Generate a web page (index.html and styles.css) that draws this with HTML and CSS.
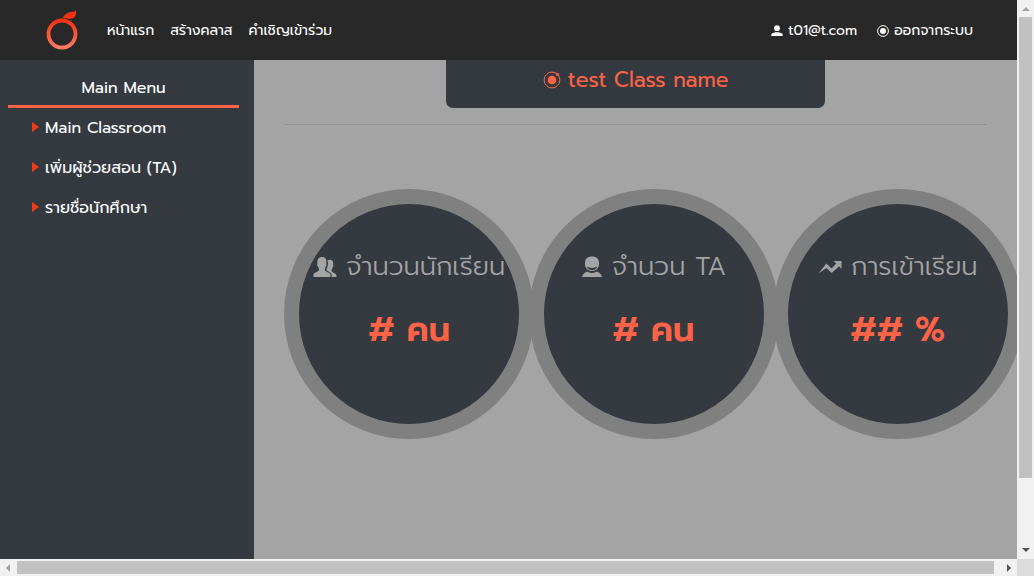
FILE: index.html
```html
<!DOCTYPE html>
<html lang="th">
<head>
<meta charset="utf-8">
<meta name="viewport" content="width=device-width, initial-scale=1">
<title>test Class name</title>
<link rel="stylesheet" href="styles.css">
</head>
<body>
<div class="page">
  <header class="topbar">
    <a class="brand" href="#" aria-label="Home">
      <svg viewBox="0 0 32 42" width="32" height="42" aria-hidden="true">
        <defs>
          <linearGradient id="ring" x1="0" y1="0" x2="0" y2="1">
            <stop offset="0" stop-color="#f53210"/>
            <stop offset="1" stop-color="#ff7a62"/>
          </linearGradient>
        </defs>
        <circle cx="16" cy="25" r="13.500" fill="none" stroke="url(#ring)" stroke-width="3.800"/>
        <path d="M16.500 9.300C19 4.200 23 3 26 2.900C28.300 2.800 29.500 2 30 1C30.600 5.700 29 9.200 25 9.800C22 10.300 19.500 8.700 16.500 9.300Z" fill="#f53210"/>
      </svg>
    </a>
    <nav class="links">
      <a href="#">หน้าแรก</a>
      <a href="#">สร้างคลาส</a>
      <a href="#">คำเชิญเข้าร่วม</a>
    </nav>
    <nav class="links account">
      <a href="#"><svg viewBox="0 0 12 12" width="12" height="12" aria-hidden="true"><circle cx="6" cy="3.200" r="2.900"/><path d="M0.300 11V9.300C1.500 7.600 4 7.200 6 7.200S10.500 7.600 11.700 9.300V11Z"/></svg>t01@t.com</a>
      <a href="#"><svg viewBox="0 0 12 12" width="12" height="12" aria-hidden="true"><circle cx="6" cy="6" r="5.400" fill="none" stroke="currentColor"/><circle cx="6" cy="6" r="3"/></svg>ออกจากระบบ</a>
    </nav>
  </header>
  <aside class="sidebar">
    <h2 class="menu-title">Main Menu</h2>
    <ul class="menu">
      <li><a href="#">Main Classroom</a></li>
      <li><a href="#">เพิ่มผู้ช่วยสอน (TA)</a></li>
      <li><a href="#">รายชื่อนักศึกษา</a></li>
    </ul>
  </aside>
  <main class="content">
    <h1 class="class-name"><svg viewBox="0 0 18 18" width="18" height="18" aria-hidden="true"><circle cx="9" cy="9" r="7.900" fill="none" stroke="currentColor"/><circle cx="9" cy="9" r="4.300"/><circle cx="14.500" cy="3.500" r="1.400"/></svg>test Class name</h1>
    <hr class="rule">
    <div class="stats">
      <section class="stat">
        <h3 class="label"><svg viewBox="0 0 24 24" width="24" height="24" aria-hidden="true"><path d="M0.500 22V19.500C1 17.500 4.500 17 5.700 15.500C6.500 14.500 5.500 13 5 11.500C4 11 3.900 9 4.400 8.500C4 4.500 5.500 2 9 2S14 4.500 13.300 8.500C13.900 9 13.600 11 12.700 11.500C12.300 13 11.300 14.500 12 15.500C13.500 17.200 17 17.500 17.500 19.500V22Z"/><path d="M14.500 5.500C18 3.200 21 5.800 20.100 9.700C20.700 10.200 20.200 12 19.500 12.500C19.200 14 18 15.500 18.800 16.500C20.300 18 23 18.300 23.500 20V22H18.700V19.500C18 17.500 15.500 16.800 13.500 15.200C13 13.800 14.500 12.500 14.700 11C15.400 9 15 7.500 14.500 5.500Z"/></svg>จำนวนนักเรียน</h3>
        <strong class="value"># คน</strong>
      </section>
      <section class="stat">
        <h3 class="label"><svg viewBox="0 0 22 24" width="22" height="24" aria-hidden="true"><path d="M4 8C4 3.500 7 1.500 11 1.500S18 3.500 18 8C18.500 13 15 16 11 16S3.500 13 4 8Z"/><path d="M5.500 11.800Q11 14 16.500 11.800Q14.500 15 11 15T5.500 11.800Z" fill="#343a40"/><path d="M1 22C1.500 19 4 17.500 6.500 16.500Q11 19.500 15.500 16.500C18 17.500 20.500 19 21 22Z"/></svg>จำนวน TA</h3>
        <strong class="value"># คน</strong>
      </section>
      <section class="stat">
        <h3 class="label"><svg viewBox="0 0 24 24" width="24" height="24" aria-hidden="true"><path d="M0.500 18.500L8.300 8.500L13.600 13.500L18.300 8.500L15.500 6H23.500V14L21 11.200L13.700 18L8.400 12.900Z"/></svg>การเข้าเรียน</h3>
        <strong class="value">## %</strong>
      </section>
    </div>
  </main>
</div>
<div class="bar bar-y" aria-hidden="true"><i class="arrow up"></i><i class="thumb"></i><i class="arrow down"></i></div>
<div class="bar bar-x" aria-hidden="true"><i class="arrow left"></i><i class="thumb"></i><i class="arrow right"></i></div>
</body>
</html>
```
FILE: styles.css
```css
* { box-sizing: border-box; }
body {
  margin: 0;
  height: 100vh;
  display: grid;
  grid-template: minmax(0, 1fr) 17px / minmax(0, 1fr) 17px;
  overflow: hidden;
  background: #dcdcdc;
  color: #fff;
  font: 16px/24px Prompt, Kanit, "Noto Sans Thai", "Noto Sans", sans-serif;
}
a { color: inherit; text-decoration: none; }
svg { fill: currentColor; flex: none; }

.page {
  display: grid;
  grid-template: 60px minmax(0, 1fr) / 25% minmax(0, 75%);
  overflow: hidden;
}
.topbar {
  grid-column: 1 / -1;
  display: flex;
  align-items: center;
  padding: 0 44px 0 46px;
  background: #282828;
  font-size: 14px;
}
.brand { display: flex; margin-right: 29px; }
.links { display: flex; gap: 16px; padding-top: 1px; white-space: nowrap; }
.links a { display: flex; align-items: center; gap: 5px; }
.account { margin-left: auto; gap: 20px; }

.sidebar { padding: 16px 15px 0 8px; background: #343a40; }
.menu-title {
  margin: 0;
  padding-bottom: 5px;
  border-bottom: 3px solid #ff6347;
  font-size: 16px;
  font-weight: 400;
  text-align: center;
}
.menu { margin: 0; padding: 8px 0 0 24px; list-style: none; }
.menu li { margin-bottom: 16px; }
.menu a { display: flex; align-items: center; gap: 6px; white-space: nowrap; }
.menu a::before {
  content: "";
  margin-bottom: 2px;
  border: solid transparent;
  border-width: 5px 0 5px 7px;
  border-left-color: #f53a1a;
}

.content { padding: 0 30px; background: #a4a4a4; }
.class-name {
  display: flex;
  justify-content: center;
  align-items: center;
  gap: 7px;
  width: 54%;
  height: 48px;
  margin: 0 auto;
  padding-bottom: 8px;
  border-radius: 0 0 7px 7px;
  background: #343a40;
  color: #ff6347;
  font-size: 21px;
  font-weight: 400;
}
.rule { margin: 16px 0 64px; border: 0; border-top: 1px solid #939393; }
.stats {
  display: grid;
  grid-template-columns: repeat(3, minmax(0, 1fr));
  margin-right: -30px;
}
.stat {
  width: 250px;
  height: 250px;
  padding-top: 45px;
  border: 15px solid #808080;
  border-radius: 50%;
  background: #343a40;
  text-align: center;
}
.label {
  display: flex;
  justify-content: center;
  align-items: center;
  gap: 9px;
  margin: 0 0 20px;
  color: #a4a4a4;
  font-size: 26px;
  font-weight: 300;
  line-height: 36px;
  white-space: nowrap;
}
.value { color: #ff6347; font-size: 34px; font-weight: 600; line-height: 50px; }

.bar { display: flex; align-items: center; justify-content: space-between; background: #f1f1f1; }
.bar-y { flex-direction: column; padding: 7px 0; }
.bar-x { padding: 0 6px; }
.thumb { background: #c1c1c1; }
.bar-y .thumb { width: 13px; height: 461px; margin: 6px 0 auto; }
.bar-x .thumb { height: 13px; width: 977px; margin: 0 auto 0 7px; }
.arrow { border: 4px solid transparent; }
.up { border-top: 0; border-bottom-color: #a3a3a3; }
.down { border-bottom: 0; border-top-color: #505050; }
.left { border-left: 0; border-right-color: #a3a3a3; }
.right { border-right: 0; border-left-color: #505050; }
```
